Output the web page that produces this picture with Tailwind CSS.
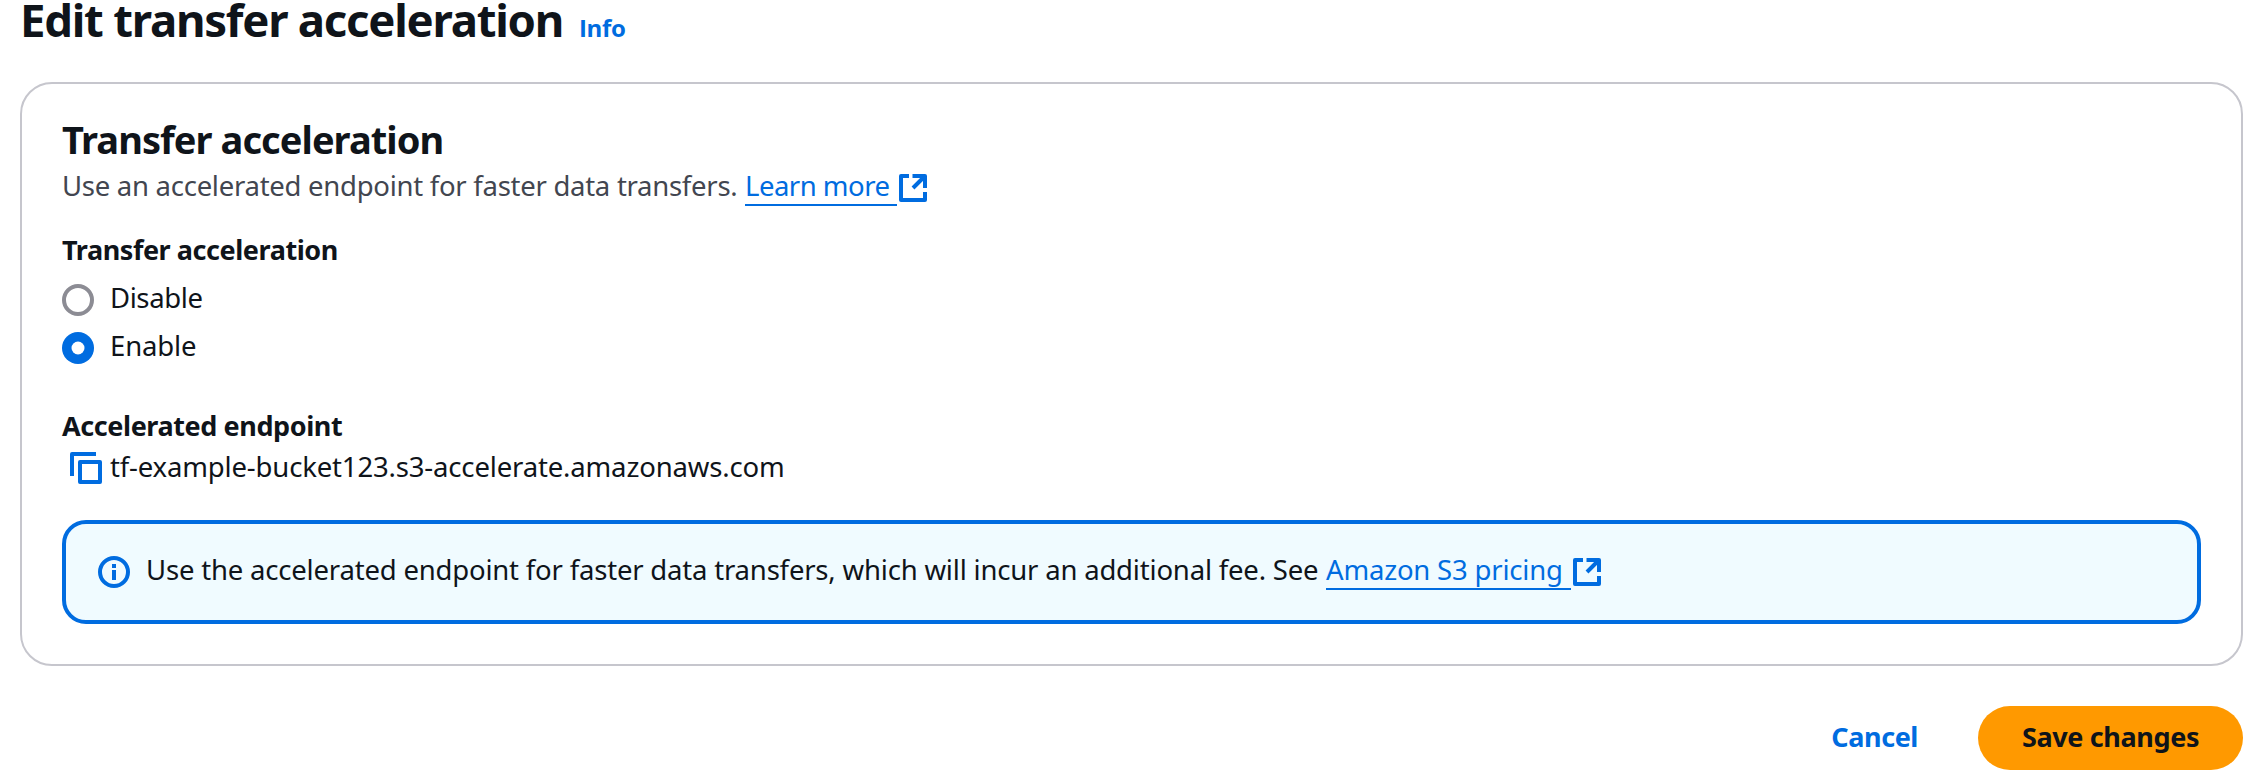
<!DOCTYPE html>
<html lang="en">
<head>
<meta charset="utf-8">
<title>Edit transfer acceleration</title>
<script src="https://cdn.jsdelivr.net/npm/@tailwindcss/browser@4"></script>
</head>
<body class="bg-white text-[#0f141a] font-['Noto_Sans','Open_Sans',sans-serif] text-[27.5px] leading-10 whitespace-nowrap">
<svg class="hidden">
  <symbol id="external" viewBox="0 0 28 28">
    <path d="M10 2H2v24h24v-8M13.500 2h12.500v12M25 3L14 14" fill="none" stroke="currentColor" stroke-width="4" stroke-linejoin="round"/>
  </symbol>
</svg>
<main class="h-[784px] pl-5 pr-[15px]">
  <header class="flex h-[82px]">
    <h1 class="w-[559px] text-[45.5px] leading-[38px] font-bold tracking-[-1.24px]">Edit transfer acceleration</h1>
    <a class="pt-[9px] font-['Open_Sans'] text-[24px] leading-[38px] font-bold text-[#006ce0] tracking-[-0.34px]">Info</a>
  </header>

  <section class="h-[584px] rounded-[32px] border-2 border-[#c6c6cd] px-10 pt-[31px]">
    <h2 class="text-[38px] leading-[48px] font-bold tracking-[-0.94px]">Transfer acceleration</h2>
    <div class="mt-[3px] flex h-10 text-[#424650]">
      <p class="w-[683px] tracking-[-0.27px]">Use an accelerated endpoint for faster data transfers.</p>
      <a class="h-10 w-[152px] border-b-2 border-[#006ce0] text-[#006ce0] tracking-[-0.5px]">Learn more</a>
      <svg class="mt-2 ml-0.5 size-7 text-[#006ce0]"><use href="#external"/></svg>
    </div>

    <h3 class="mt-6 font-bold text-[27px] tracking-[-0.43px]">Transfer acceleration</h3>
    <div class="mt-2 flex h-10 gap-4">
      <svg class="mt-1.5 size-8" viewBox="0 0 32 32"><circle cx="16" cy="16" r="14" fill="#fff" stroke="#8c8c94" stroke-width="4"/></svg>
      <span class="tracking-[-0.4px]">Disable</span>
    </div>
    <div class="mt-2 flex h-10 gap-4">
      <svg class="mt-1.5 size-8" viewBox="0 0 32 32"><circle cx="16" cy="16" r="16" fill="#006ce0"/><circle cx="16" cy="16" r="6.5" fill="#fff"/></svg>
      <span class="tracking-[-0.15px]">Enable</span>
    </div>

    <h3 class="mt-10 font-bold text-[27px] tracking-[-0.41px]">Accelerated endpoint</h3>
    <div class="mt-px flex h-10 gap-2 pl-2">
      <svg class="mt-[5px] size-8 text-[#006ce0]" viewBox="0 0 32 32" fill="none" stroke="currentColor" stroke-width="4" stroke-linejoin="round"><path d="M2 24V2h24"/><path d="M10 10h20v20H10z"/></svg>
      <span class="tracking-[-0.157px]">tf-example-bucket123.s3-accelerate.amazonaws.com</span>
    </div>

    <div class="mt-[33px] flex h-[104px] rounded-[24px] border-4 border-[#006ce0] bg-[#f0fbff] pt-[26px] pl-8">
      <svg class="mt-1.5 size-8 text-[#006ce0]" viewBox="0 0 32 32"><circle cx="16" cy="16" r="14" fill="none" stroke="currentColor" stroke-width="4"/><path d="M14 8h4v4h-4zM14 14h4v10h-4z" fill="currentColor"/></svg>
      <p class="ml-4 w-[1180px] tracking-[-0.19px]">Use the accelerated endpoint for faster data transfers, which will incur an additional fee. See</p>
      <a class="h-10 w-[245px] border-b-2 border-[#006ce0] text-[#006ce0] tracking-[-0.19px]">Amazon S3 pricing</a>
      <svg class="mt-2 ml-0.5 size-7 text-[#006ce0]"><use href="#external"/></svg>
    </div>
  </section>

  <footer class="mt-10 flex h-16 items-center justify-end gap-[60px] text-[27px] font-bold">
    <button class="pb-[3px] text-[#006ce0] tracking-[-0.42px]">Cancel</button>
    <button class="h-16 w-[265px] rounded-full bg-[#ff9900] pb-[3px] tracking-[-0.36px]">Save changes</button>
  </footer>
</main>
</body>
</html>
